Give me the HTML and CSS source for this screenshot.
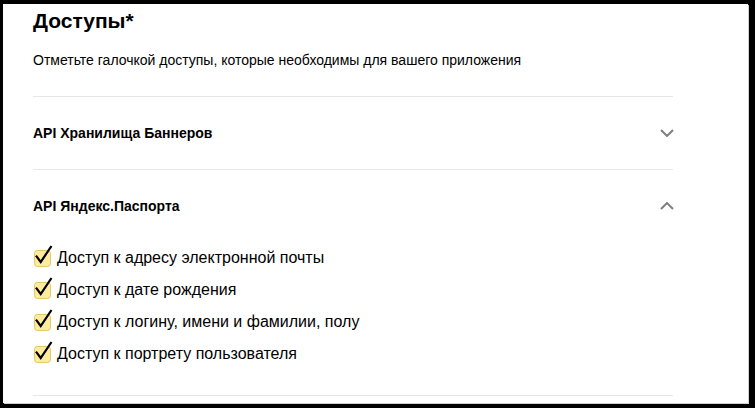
FILE: index.html
```html
<!DOCTYPE html>
<html lang="ru">
<head>
<meta charset="utf-8">
<title>Доступы</title>
<link rel="stylesheet" href="styles.css">
</head>
<body>
<div class="panel">
  <div class="content">
    <h1 class="title">Доступы*</h1>
    <p class="subtitle">Отметьте галочкой доступы, которые необходимы для вашего приложения</p>
    <div class="divider"></div>
    <div class="section-head">
      <span class="section-title">API Хранилища Баннеров</span>
      <svg class="chevron" width="14" height="8" viewBox="0 0 14 8"><path d="M1 1 L7 7 L13 1" fill="none" stroke="#7f7f7f" stroke-width="2"/></svg>
    </div>
    <div class="divider"></div>
    <div class="section-head">
      <span class="section-title">API Яндекс.Паспорта</span>
      <svg class="chevron" width="14" height="8" viewBox="0 0 14 8"><path d="M1 7 L7 1 L13 7" fill="none" stroke="#7f7f7f" stroke-width="2"/></svg>
    </div>
    <ul class="checks">
      <li class="check-row">
        <svg class="checkbox" width="19" height="22" viewBox="0 0 19 22"><rect x="0.5" y="5.5" width="16" height="16" rx="3" fill="#ffeba0" stroke="#e3c768"/><path d="M2 10.7 L6.7 17 L17.5 1" fill="none" stroke="#000" stroke-width="2.2"/></svg>
        <span>Доступ к адресу электронной почты</span>
      </li>
      <li class="check-row">
        <svg class="checkbox" width="19" height="22" viewBox="0 0 19 22"><rect x="0.5" y="5.5" width="16" height="16" rx="3" fill="#ffeba0" stroke="#e3c768"/><path d="M2 10.7 L6.7 17 L17.5 1" fill="none" stroke="#000" stroke-width="2.2"/></svg>
        <span>Доступ к дате рождения</span>
      </li>
      <li class="check-row">
        <svg class="checkbox" width="19" height="22" viewBox="0 0 19 22"><rect x="0.5" y="5.5" width="16" height="16" rx="3" fill="#ffeba0" stroke="#e3c768"/><path d="M2 10.7 L6.7 17 L17.5 1" fill="none" stroke="#000" stroke-width="2.2"/></svg>
        <span>Доступ к логину, имени и фамилии, полу</span>
      </li>
      <li class="check-row">
        <svg class="checkbox" width="19" height="22" viewBox="0 0 19 22"><rect x="0.5" y="5.5" width="16" height="16" rx="3" fill="#ffeba0" stroke="#e3c768"/><path d="M2 10.7 L6.7 17 L17.5 1" fill="none" stroke="#000" stroke-width="2.2"/></svg>
        <span>Доступ к портрету пользователя</span>
      </li>
    </ul>
    <div class="divider"></div>
  </div>
</div>
</body>
</html>
```

FILE: styles.css
```css
html, body {
  margin: 0;
  padding: 0;
  background: #000;
  height: 100%;
  overflow: hidden;
}
body {
  font-family: "Liberation Sans", Arial, sans-serif;
  color: #000;
}
.panel {
  margin: 4px 0 0 3px;
  width: 745px;
  height: 399px;
  background: #fff;
  box-shadow: 1px 1px 0 #cfcfcf;
  box-sizing: border-box;
  padding-top: 2px;
}
.content {
  margin-left: 30px;
  width: 640px;
}
.title {
  margin: 0;
  font-size: 21px;
  line-height: 30px;
  font-weight: bold;
}
.subtitle {
  margin: 14px 0 0;
  font-size: 14px;
  line-height: 20px;
}
.divider {
  height: 1px;
  background: #e6e6e6;
}
.subtitle + .divider {
  margin-top: 26px;
}
.section-head {
  height: 72px;
  display: flex;
  align-items: center;
  justify-content: space-between;
}
.section-title {
  font-size: 14px;
  font-weight: bold;
}
.chevron {
  display: block;
  margin-right: -1px;
}
.checks {
  list-style: none;
  margin: 0 0 25px;
  padding: 0;
}
.check-row {
  height: 32px;
  display: flex;
  align-items: center;
  font-size: 16px;
}
.checkbox {
  display: block;
  margin: 0 4px 4px 1px;
  flex: none;
}
```
